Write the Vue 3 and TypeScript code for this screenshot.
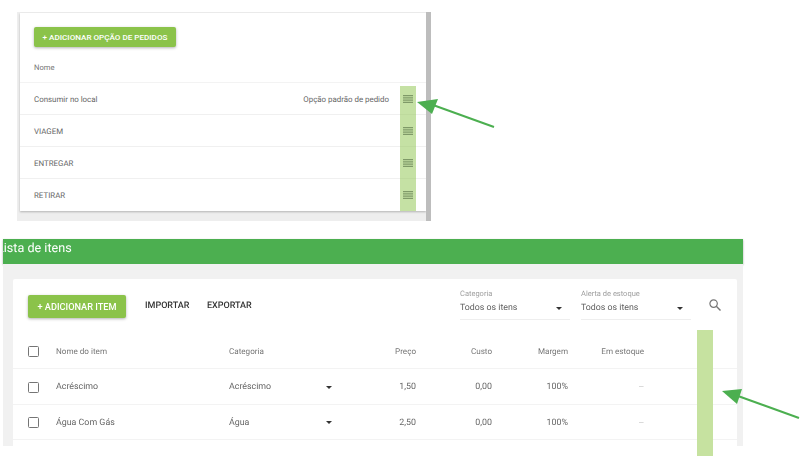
<template>
  <div class="page">
    <section class="options-wrap">
      <div class="options-bg">
        <div class="options-card">
          <div class="options-top">
            <button class="btn-green btn-small">+ ADICIONAR OPÇÃO DE PEDIDOS</button>
          </div>
          <div class="options-head">Nome</div>
          <div v-for="opt in options" :key="opt.name" class="option-row">
            <span>{{ opt.name }}</span>
            <span class="option-default">{{ opt.note }}</span>
            <svg class="drag" width="10" height="8" viewBox="0 0 10 8">
              <path d="M0 .5h10M0 2.25h10M0 4h10M0 5.75h10M0 7.5h10" stroke="#7f9a68" stroke-width="1" fill="none" />
            </svg>
          </div>
        </div>
      </div>
      <div class="scrollbar"></div>
      <div class="mark mark-top"></div>
    </section>

    <section class="items">
      <div class="items-title">Lista de itens</div>
      <div class="items-body">
        <div class="items-card">
          <div class="toolbar">
            <button class="btn-green btn-big">+ ADICIONAR ITEM</button>
            <span class="link">IMPORTAR</span>
            <span class="link">EXPORTAR</span>
            <div class="filters">
              <div v-for="f in filters" :key="f" class="filter">
                <label>{{ f }}</label>
                <div class="filter-value">Todos os itens<i class="caret"></i></div>
              </div>
            </div>
            <svg class="search" width="12" height="12" viewBox="0 0 12 12">
              <circle cx="4.6" cy="4.6" r="3.7" fill="none" stroke="#757575" stroke-width="1.2" />
              <path d="M7.3 7.3l4.2 4.2" stroke="#757575" stroke-width="1.4" />
            </svg>
          </div>
          <div class="t-row t-head">
            <i class="check"></i>
            <span>Nome do item</span>
            <span>Categoria</span>
            <span class="num">Preço</span>
            <span class="num">Custo</span>
            <span class="num">Margem</span>
            <span class="num">Em estoque</span>
          </div>
          <div v-for="it in items" :key="it.name" class="t-row">
            <i class="check"></i>
            <span>{{ it.name }}</span>
            <span class="cat">{{ it.cat }}<i class="caret"></i></span>
            <span class="num">{{ it.price }}</span>
            <span class="num">0,00</span>
            <span class="num">100%</span>
            <span class="num dash">—</span>
          </div>
        </div>
      </div>
    </section>

    <div class="mark mark-bottom"></div>

    <svg class="arrows" width="800" height="456" viewBox="0 0 800 456">
      <path d="M494 127L433 105" stroke="#4caf50" stroke-width="2" fill="none" />
      <path d="M417 102L438 99L432 114Z" fill="#4caf50" />
      <path d="M799 418L738 396" stroke="#4caf50" stroke-width="2" fill="none" />
      <path d="M722 391L742 389L737 404Z" fill="#4caf50" />
    </svg>
  </div>
</template>

<script setup lang="ts">
const options = [
  { name: 'Consumir no local', note: 'Opção padrão de pedido' },
  { name: 'VIAGEM', note: '' },
  { name: 'ENTREGAR', note: '' },
  { name: 'RETIRAR', note: '' },
]
const filters = ['Categoria', 'Alerta de estoque']
const items = [
  { name: 'Acréscimo', cat: 'Acréscimo', price: '1,50' },
  { name: 'Água Com Gás', cat: 'Água', price: '2,50' },
]
</script>

<style>
html, body { margin: 0; background: #fff; overflow: hidden; }
</style>

<style scoped>
.page {
  position: relative; width: 800px; height: 456px; overflow: hidden;
  font-family: Roboto, "Liberation Sans", sans-serif; color: #666;
  padding-top: 12px; box-sizing: border-box; filter: blur(0.4px);
  text-rendering: geometricPrecision;
}
.options-wrap { position: relative; display: flex; width: 414px; margin-left: 17px; height: 209px; }
.options-bg { width: 409px; background: #eee; padding: 1px 0 10px 3px; box-sizing: border-box; }
.options-card { background: #fff; height: 198px; box-shadow: 0 1px 2px rgba(0,0,0,.25); }
.options-top { padding: 14px 0 0 14px; height: 21px; }
.btn-green {
  display: block; border: 0; border-radius: 2px; background: #8bc34a; color: #fff;
  font-family: inherit; font-weight: 500; padding: 0; box-shadow: 0 1px 3px rgba(0,0,0,.3);
}
.btn-small { width: 142px; height: 20px; font-size: 8.1px; }
.options-head {
  height: 35px; display: flex; align-items: center; padding: 5px 0 0 14px;
  font-size: 7.6px; color: #757575; border-bottom: 1px solid #f3f3f3; box-sizing: border-box;
}
.option-row {
  height: 32px; display: flex; align-items: center; padding: 2px 0 0 14px; position: relative;
  font-size: 7.9px; border-bottom: 1px solid #f0f0f0; box-sizing: border-box;
}
.option-row:last-child { border-bottom: 0; padding-top: 0; }
.option-default { position: absolute; right: 37px; }
.drag { position: absolute; right: 13px; top: 12px; z-index: 2; }
.scrollbar { width: 5px; background: #bdbdbd; }
.mark { position: absolute; background: rgba(139,195,74,.5); z-index: 1; }
.mark-top { left: 382.5px; top: 74px; width: 16.5px; height: 125px; }
.mark-bottom { left: 697px; top: 330px; width: 16px; height: 126px; background: #c6e2a0; }
.items { margin: 18px 0 0 3px; width: 740px; }
.items-title {
  height: 25px; background: #4caf50; color: #fff; font-size: 12.6px; line-height: 20px;
  text-indent: -6px; overflow: hidden; box-shadow: 0 1px 2px rgba(0,0,0,.35);
}
.items-body { background: #f1f1f1; padding: 15px 6px 0 10px; height: 182px; box-sizing: border-box; }
.items-card { background: #fff; border-radius: 2px 2px 0 0; height: 167px; }
.toolbar { position: relative; display: flex; align-items: flex-start; height: 51px; padding: 16px 0 0 15px; box-sizing: border-box; }
.btn-big { width: 98px; height: 23px; font-size: 9.2px; }
.link { font-size: 9px; font-weight: 500; color: #333; margin-left: 19px; line-height: 23px; }
.link + .link { margin-left: 17.5px; }
.filters { position: absolute; left: 447px; top: 10px; display: flex; gap: 11px; }
.filter { width: 110px; height: 30px; border-bottom: 1px solid #eee; }
.filter label { display: block; font-size: 7.5px; color: #9e9e9e; line-height: 10px; }
.filter-value { display: flex; justify-content: space-between; align-items: center; padding-right: 8px; margin-top: 1px; font-size: 8.8px; color: #616161; line-height: 16px; }
.caret { display: inline-block; width: 0; height: 0; border: 3.5px solid transparent; border-top-color: #333; border-bottom: 0; }
.search { position: absolute; left: 696px; top: 20px; }
.t-row {
  display: grid; grid-template-columns: 28px 173px 109px 78px 76px 76px 76px;
  align-items: center; height: 35.5px; padding: 1.5px 0 0 15px; font-size: 8.85px;
  border-bottom: 1px solid #f3f3f3; box-sizing: border-box;
}
.t-head { height: 39px; padding-top: 4px; color: #757575; font-size: 8.1px; }
.check { display: block; width: 9px; height: 9px; border: 1.4px solid #757575; border-radius: 1.5px; }
.cat { display: flex; justify-content: space-between; align-items: center; padding-right: 6px; }
.num { text-align: right; }
.dash { color: #bdbdbd; font-size: 7px; }
.arrows { position: absolute; left: 0; top: 0; z-index: 3; }
</style>
